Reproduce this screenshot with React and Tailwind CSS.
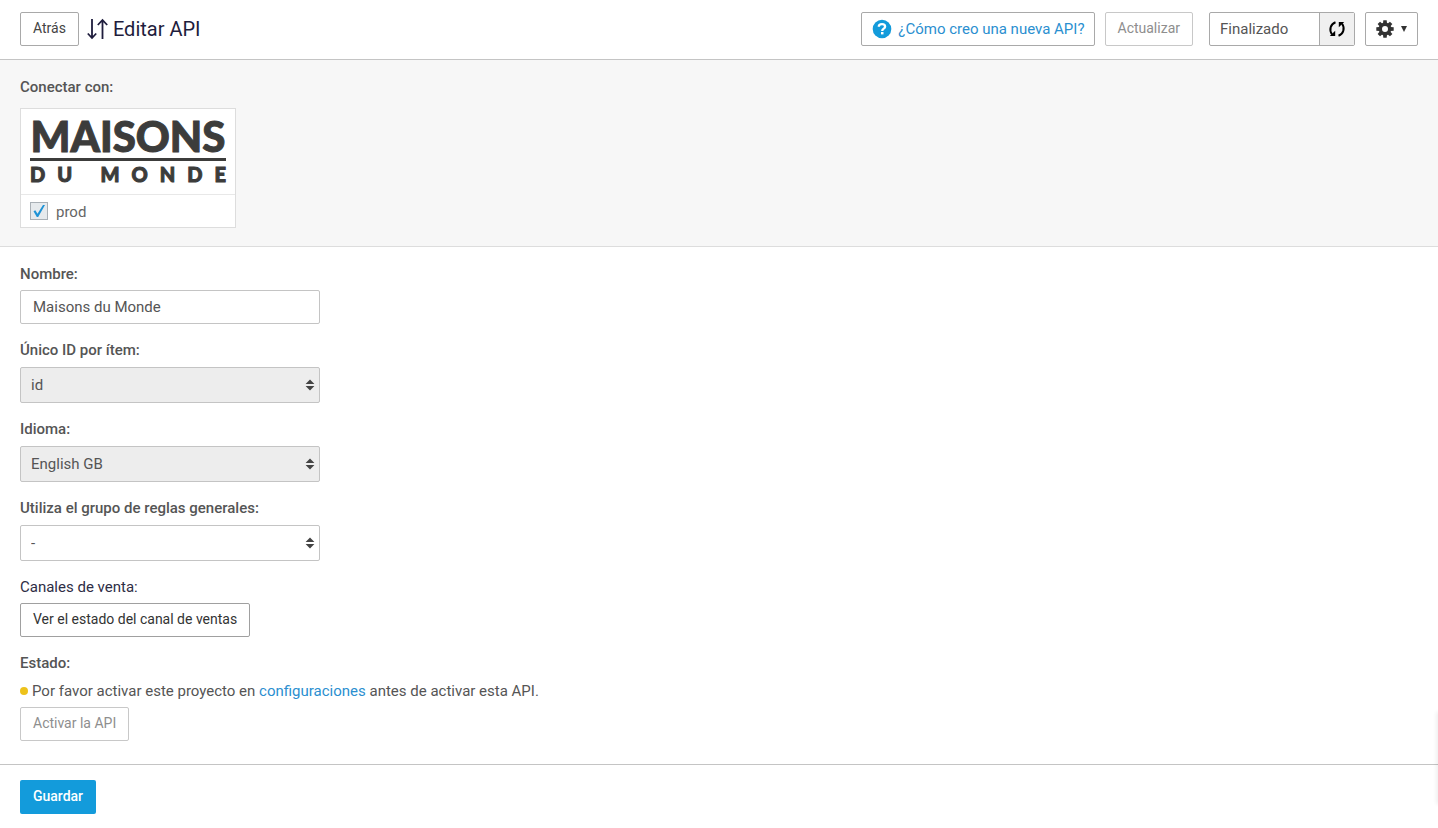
import { useState } from "react";

const buttonBase =
  "inline-flex h-[34px] items-center justify-center rounded-xs border bg-white px-3 pb-0.5 text-sm";

function SortArrows() {
  return (
    <svg width="22" height="22" viewBox="0 0 22 22" fill="none" stroke="#1f1d3d" strokeWidth="1.8" aria-hidden="true">
      <path d="M5 1v19M.8 15.500L5 20l4.200-4.500" />
      <path d="M15.500 21V2M10.800 7l4.700-5 4.700 5" />
    </svg>
  );
}

function HelpIcon() {
  return (
    <svg width="20" height="20" viewBox="0 0 20 20" aria-hidden="true">
      <circle cx="10" cy="10" r="9.300" fill="#139bdb" />
      <path d="M6.800 7.800C6.800 5.900 8.300 5.200 10 5.200s3.100.8 3.100 2.500c0 2-2.900 2-2.900 4.200" fill="none" stroke="#fff" strokeWidth="2.300" />
      <rect x="9" y="13" width="2.500" height="2.400" fill="#fff" />
    </svg>
  );
}

function RefreshIcon() {
  return (
    <svg width="18" height="18" viewBox="0 0 18 18" aria-hidden="true">
      <path d="M7.500 2.200C2.500 4 .8 10 4 14.500M10.500 15.800c5-1.800 6.700-7.800 3.500-12.300" fill="none" stroke="#000" strokeWidth="2" />
      <path d="M1.800 16h5.400v-5.200zM16.200 2h-5.400v5.200z" fill="#000" />
    </svg>
  );
}

function GearIcon() {
  const teeth = [0, 45, 90, 135, 180, 225, 270, 315];

  return (
    <svg width="18" height="18" viewBox="0 0 18 18" aria-hidden="true">
      <circle cx="9" cy="9" r="4.700" fill="none" stroke="#333" strokeWidth="3.400" />
      {teeth.map((angle) => (
        <path
          key={angle}
          d="M7 3.500L7.300.3h3.400L11 3.500z"
          fill="#333"
          transform={`rotate(${angle} 9 9)`}
        />
      ))}
    </svg>
  );
}

function Logo() {
  return (
    <div className="flex h-[85px] flex-col px-[9px] pt-[9px] font-['Lato',sans-serif] font-black text-[#3c3c3b]">
      <div className="flex h-9 items-center justify-center text-[42px] leading-9 [-webkit-text-stroke:1px_#3c3c3b]">
        MAISONS
      </div>
      <div className="mt-1 h-[3px] bg-[#3c3c3b]" />
      <div className="mt-[3px] flex justify-between text-xl leading-5 [-webkit-text-stroke:1px_#3c3c3b]">
        <span className="flex gap-3">
          <span>D</span>
          <span>U</span>
        </span>
        <span className="flex gap-3">
          <span>M</span>
          <span>O</span>
          <span>N</span>
          <span>D</span>
          <span>E</span>
        </span>
      </div>
    </div>
  );
}

function SelectField({ id, label, options, disabled }) {
  return (
    <div>
      <label htmlFor={id} className="mb-[5px] block font-medium">
        {label}
      </label>
      <div className="relative w-full max-w-[300px]">
        <select
          id={id}
          disabled={disabled}
          className="block h-9 w-full appearance-none rounded-xs border border-[#c4c4c4] bg-white px-2.5 text-[#555] disabled:bg-[#ededed] disabled:opacity-100"
        >
          {options.map((option) => (
            <option key={option}>{option}</option>
          ))}
        </select>
        <svg
          className="pointer-events-none absolute top-3 right-[5px]"
          width="10"
          height="12"
          viewBox="0 0 10 12"
          fill="#444"
          aria-hidden="true"
        >
          <path d="M.6 5L5 .4 9.400 5zM.6 7h8.800L5 11.600z" />
        </svg>
      </div>
    </div>
  );
}

function App() {
  const [name, setName] = useState("Maisons du Monde");
  const [prod, setProd] = useState(true);

  return (
    <div className="bg-white font-['Roboto',sans-serif] text-[15px] leading-6 text-[#555]">
      <header className="flex items-center justify-between border-b border-[#c4c4c4] px-5 pt-3 pb-[13px]">
        <div className="flex items-center">
          <button type="button" className={`${buttonBase} border-[#a9a9a9] text-[#444]`}>
            Atrás
          </button>
          <h1 className="ml-2 flex items-center gap-1 text-xl text-[#1f1d3d]">
            <SortArrows />
            Editar API
          </h1>
        </div>

        <div className="flex items-center">
          <a
            href="#ayuda"
            className="mr-2.5 flex h-[34px] items-center gap-1.5 rounded-xs border border-[#a9a9a9] pr-[9px] pl-2.5 text-[#2b8fd0]"
          >
            <HelpIcon />
            ¿Cómo creo una nueva API?
          </a>
          <button type="button" disabled className={`${buttonBase} mr-4 border-[#c8c8c8] text-[#8e8e8e]`}>
            Actualizar
          </button>
          <div className="mr-2.5 flex h-[34px] rounded-xs border border-[#a9a9a9]">
            <span className="flex w-[109px] items-center px-2.5">Finalizado</span>
            <button
              type="button"
              aria-label="Recargar"
              className="flex w-[35px] items-center justify-center border-l border-[#a9a9a9] bg-[#f0f0f0]"
            >
              <RefreshIcon />
            </button>
          </div>
          <button
            type="button"
            aria-label="Opciones"
            className="flex h-[34px] items-center gap-[7px] rounded-xs border border-[#a9a9a9] px-2.5"
          >
            <GearIcon />
            <svg width="6" height="6" viewBox="0 0 6 6" fill="#333" aria-hidden="true">
              <path d="M0 0h6L3 6z" />
            </svg>
          </button>
        </div>
      </header>

      <section className="border-b border-[#ddd] bg-[#f7f7f7] px-5 pt-[15px] pb-[18px]">
        <h2 className="mb-[9px] font-medium">Conectar con:</h2>
        <div className="w-[216px] border border-[#ddd] bg-white">
          <Logo />
          <label className="flex h-[33px] items-center gap-2 border-t border-[#e8e8e8] px-[9px]">
            <span className="relative size-[18px]">
              <input
                type="checkbox"
                checked={prod}
                onChange={(e) => setProd(e.target.checked)}
                className="peer block size-[18px] appearance-none border border-[#a9b0b6] bg-[#e6eaed]"
              />
              <svg
                className="pointer-events-none absolute inset-0 hidden peer-checked:block"
                width="18"
                height="18"
                viewBox="0 0 18 18"
                aria-hidden="true"
              >
                <path d="M3.500 9.200l1.800-.9 2.200 3.400L13 3h2L8.200 15H6.800z" fill="#1f93d6" />
              </svg>
            </span>
            <span className="pt-0.5 text-[#666]">prod</span>
          </label>
        </div>
      </section>

      <form onSubmit={(e) => e.preventDefault()}>
        <div className="flex flex-col gap-3.5 px-5 pt-[15px] pb-[23px]">
          <div>
            <label htmlFor="name" className="mb-1 block font-medium">
              Nombre:
            </label>
            <input
              id="name"
              value={name}
              onChange={(e) => setName(e.target.value)}
              className="block h-[34px] w-full max-w-[300px] rounded-xs border border-[#c4c4c4] px-3"
            />
          </div>

          <SelectField id="item-id" label="Único ID por ítem:" options={["id"]} disabled />
          <SelectField id="language" label="Idioma:" options={["English GB"]} disabled />
          <SelectField id="rules" label="Utiliza el grupo de reglas generales:" options={["-"]} />

          <div>
            <p className="mb-1 text-[#2e2d45]">Canales de venta:</p>
            <button type="button" className={`${buttonBase} border-[#a0a0a0] text-[#333]`}>
              Ver el estado del canal de ventas
            </button>
          </div>

          <div className="flex flex-col items-start gap-1">
            <h2 className="font-medium">Estado:</h2>
            <p className="flex items-center">
              <span className="mr-1 size-2 rounded-full bg-[#edc21b]" />
              <span>
                Por favor activar este proyecto en{" "}
                <a href="#configuraciones" className="text-[#2b8fd0]">
                  configuraciones
                </a>{" "}
                antes de activar esta API.
              </span>
            </p>
            <button type="button" disabled className={`${buttonBase} border-[#c8c8c8] text-[#8e8e8e]`}>
              Activar la API
            </button>
          </div>
        </div>

        <footer className="border-t border-[#c4c4c4] px-5 pt-[15px] pb-3.5">
          <button
            type="submit"
            className="flex h-[34px] items-center rounded-xs bg-[#139bdb] px-[13px] pb-0.5 text-sm font-medium text-white"
          >
            Guardar
          </button>
        </footer>
      </form>

      <div className="fixed -right-px bottom-6 h-[92px] w-px bg-white shadow-[0_0_4px_rgba(0,0,0,0.3)]" />
    </div>
  );
}

export default App;
